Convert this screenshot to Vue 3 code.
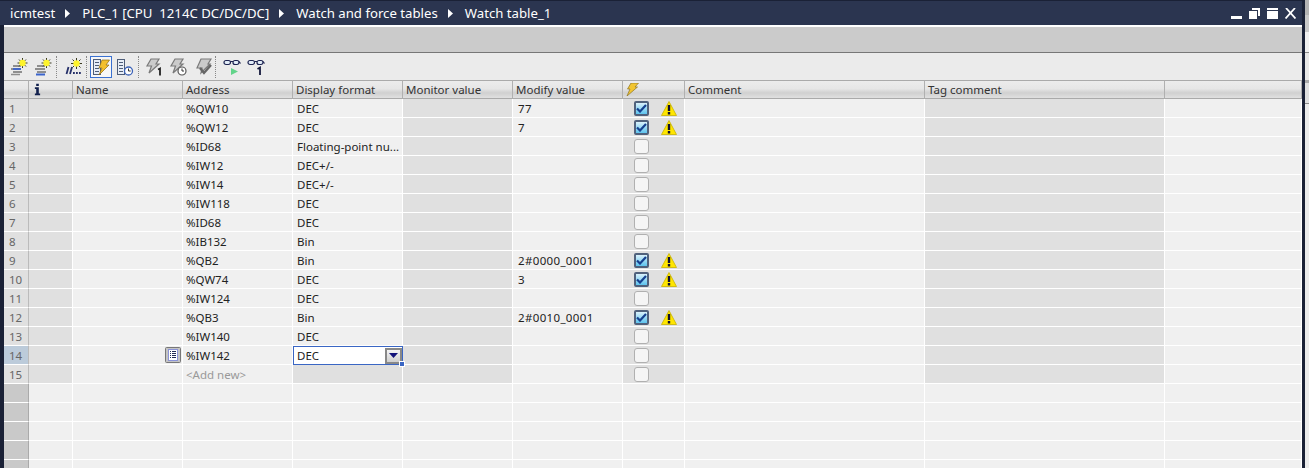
<script setup>
const crumbs = ['icmtest', 'PLC_1 [CPU  1214C DC/DC/DC]', 'Watch and force tables', 'Watch table_1']
const columns = [
  { label: '' }, { label: '', info: true }, { label: 'Name' }, { label: 'Address' }, { label: 'Display format' },
  { label: 'Monitor value' }, { label: 'Modify value' }, { label: '', bolt: true }, { label: 'Comment' },
  { label: 'Tag comment' }, { label: '' }
]
const rows = [
  ['%QW10', 'DEC', '77', true], ['%QW12', 'DEC', '7', true], ['%ID68', 'Floating-point nu...', '', false],
  ['%IW12', 'DEC+/-', '', false], ['%IW14', 'DEC+/-', '', false], ['%IW118', 'DEC', '', false],
  ['%ID68', 'DEC', '', false], ['%IB132', 'Bin', '', false], ['%QB2', 'Bin', '2#0000_0001', true],
  ['%QW74', 'DEC', '3', true], ['%IW124', 'DEC', '', false], ['%QB3', 'Bin', '2#0010_0001', true],
  ['%IW140', 'DEC', '', false], ['%IW142', 'DEC', '', false], ['<Add new>', '', '', false]
].map(([address, format, modify, forced], i) => ({ n: i + 1, address, format, modify, forced }))
const emptyRows = [1, 2, 3, 4, 5]
</script>

<template>
  <div class="window">
    <div class="leftcol">
      <div class="titlebar">
        <template v-for="(c, i) in crumbs" :key="c">
          <span class="crumb">{{ c }}</span>
          <svg v-if="i < crumbs.length - 1" class="sep" width="5" height="9" viewBox="0 0 5 9"><path d="M0 0l5 4.500L0 9z" fill="#fff" /></svg>
        </template>
        <div class="winbtns">
          <svg width="11" height="11" viewBox="0 0 11 11"><rect x="0" y="8" width="11" height="3" fill="#fff" /></svg>
          <svg width="11" height="11" viewBox="0 0 11 11"><path d="M3 0h8v8H9V2H3z" fill="#fff" /><rect x="0" y="3" width="8" height="8" fill="#fff" /></svg>
          <svg width="11" height="11" viewBox="0 0 11 11"><path d="M0 0h11v11H0z" fill="#fff" /><rect x="0" y="2" width="11" height="1" fill="#2b3550" /></svg>
          <svg width="11" height="11" viewBox="0 0 11 11"><path d="M1 0l9.500 10.500M10 0L.5 10.500" stroke="#fff" stroke-width="1.800" fill="none" /></svg>
        </div>
      </div>
      <div class="body">
        <div class="sidebar"></div>
        <div class="main">
          <div class="band"></div>
          <div class="toolbar">
            <svg class="ti m0" width="18" height="18" viewBox="0 0 18 18"><path d="M3 8h8M1 11h10M3 14h9" stroke="#8f8f8f" stroke-width="1.800" /><path d="M1 16.500h9" stroke="#8f8f8f" stroke-width="1.500" /><path d="M3 11h8" stroke="#3b64cc" stroke-width="1.800" /><path d="M12.500 0v10M7.500 5h10M9 1.500l7 7M16 1.500l-7 7" stroke="#3b3b20" stroke-width="1" /><circle cx="12.500" cy="5" r="3.200" fill="#fdf32c" /></svg>
            <svg class="ti m6" width="18" height="18" viewBox="0 0 18 18"><path d="M3 8h8M1 11h10M3 14h9" stroke="#8f8f8f" stroke-width="1.800" /><path d="M2 16.500h9" stroke="#3b64cc" stroke-width="2" /><path d="M12.500 0v10M7.500 5h10M9 1.500l7 7M16 1.500l-7 7" stroke="#3b3b20" stroke-width="1" /><circle cx="12.500" cy="5" r="3.200" fill="#fdf32c" /></svg>
            <i class="tsep a"></i>
            <svg class="ti m6" width="18" height="18" viewBox="0 0 18 18"><path d="M2.500 16l2-7M6 16l2-7" stroke="#27316a" stroke-width="1.800" /><path d="M9 15h1.800M12 15h1.800M15 15h1.800" stroke="#27316a" stroke-width="2.200" /><path d="M12.500 0v11M7 5.500h11M8.500 1.500l8 8M16.500 1.500l-8 8" stroke="#3b3b20" stroke-width="1" /><circle cx="12.500" cy="5.500" r="3.200" fill="#fdf32c" /></svg>
            <i class="tsep b"></i>
            <span class="active">
              <svg width="18" height="18" viewBox="0 0 18 18"><rect x="1.500" y="1.500" width="7" height="15" fill="#e8eef7" stroke="#4e5d78" /><path d="M3 4.500h4M3 7.500h4M3 10.500h4M3 13.500h4" stroke="#4e5d78" /><path d="M10 2h7.500l-3.500 5h3L7 17l3-7H7z" fill="#f3c02c" stroke="#8a6a16" stroke-width=".7" /></svg>
            </span>
            <svg class="ti m4" width="18" height="18" viewBox="0 0 18 18"><rect x="1.500" y="1.500" width="7" height="15" fill="#e8eef7" stroke="#4e5d78" /><path d="M3 4.500h4M3 7.500h4M3 10.500h4M3 13.500h4" stroke="#4e5d78" /><circle cx="12.500" cy="13" r="4" fill="#fff" stroke="#3b62b8" stroke-width="1.300" /><path d="M12.500 10.500V13h2.200" stroke="#333" fill="none" /></svg>
            <i class="tsep c"></i>
            <svg class="ti m6" width="18" height="18" viewBox="0 0 18 18"><path d="M6 1h8l-3 5h3L4 15l2.500-7H2z" fill="#cbcbcb" stroke="#7a7a7a" stroke-width="1.200" /><path d="M13 11.500l2-1v7" stroke="#222" stroke-width="1.800" fill="none" /></svg>
            <svg class="ti m6" width="18" height="18" viewBox="0 0 18 18"><path d="M6 1h8l-3 5h3L4 15l2.500-7H2z" fill="#cbcbcb" stroke="#7a7a7a" stroke-width="1.200" /><circle cx="13" cy="13" r="4" fill="#fff" stroke="#555" stroke-width="1.200" /><path d="M13 10.500V13h2" stroke="#333" fill="none" /></svg>
            <svg class="ti m7" width="18" height="18" viewBox="0 0 18 18"><path d="M7 1h10l-3 5h2L7 15l1-5H3z" fill="#cbcbcb" stroke="#7a7a7a" stroke-width="1.200" /><path d="M6 10l4 5 7-8" stroke="#666" stroke-width="2.400" fill="none" /></svg>
            <i class="tsep d"></i>
            <svg class="ti m7" width="18" height="18" viewBox="0 0 18 18"><rect x="1" y="2.500" width="6.500" height="4" rx="2" fill="#e2ecf7" stroke="#1c2350" stroke-width="1.200" /><rect x="10" y="2.500" width="6" height="4" rx="2" fill="#e2ecf7" stroke="#1c2350" stroke-width="1.200" /><path d="M7.500 3.500H10M16 3.500l1.500 2" stroke="#1c2350" stroke-width="1.200" fill="none" /><path d="M8 10l7 3.500L8 17z" fill="#62d48a" /></svg>
            <svg class="ti m6" width="18" height="18" viewBox="0 0 18 18"><rect x="1" y="2.500" width="6.500" height="4" rx="2" fill="#e2ecf7" stroke="#1c2350" stroke-width="1.200" /><rect x="10" y="2.500" width="6" height="4" rx="2" fill="#e2ecf7" stroke="#1c2350" stroke-width="1.200" /><path d="M7.500 3.500H10M16 3.500l1.500 2" stroke="#1c2350" stroke-width="1.200" fill="none" /><path d="M10.500 11l2.500-1.500V17" stroke="#14193d" stroke-width="1.800" fill="none" /></svg>
          </div>
          <div class="table">
            <div v-for="(col, i) in columns" :key="i" class="th">
              <svg v-if="col.info" class="info" width="7" height="13" viewBox="0 0 8 13"><path d="M2.500 0h3v2.500h-3zM1 4h4.500v7H7v2H1v-2h1.500V6H1z" fill="#12204d" /></svg>
              <svg v-else-if="col.bolt" width="13" height="13" viewBox="0 0 13 13"><path d="M5 0h7.500L9 4h2.500L1 13l3-7H1.500z" fill="#f2c531" stroke="#8b7327" stroke-width=".7" /></svg>
              <template v-else>{{ col.label }}</template>
            </div>
            <template v-for="row in rows" :key="row.n">
              <div class="td num" :class="{ cur: row.n === 14 }">{{ row.n }}</div>
              <div class="td dim"></div>
              <div class="td name">
                <svg v-if="row.n === 14" class="rowbtn" width="16" height="16" viewBox="0 0 16 16"><rect x=".5" y=".5" width="15" height="15" rx="1" fill="#c4c4c4" stroke="#777" /><rect x="3.500" y="2.500" width="9" height="11" fill="#fff" stroke="#8a93d8" /><path d="M5 4.500h1M7 4.500h4M5 6.500h1M7 6.500h4M5 8.500h1M7 8.500h4M5 10.500h1M7 10.500h4" stroke="#232c55" /></svg>
              </div>
              <div class="td" :class="{ add: row.n === 15 }">{{ row.address }}</div>
              <div v-if="row.n === 14" class="td editing">
                <span>{{ row.format }}</span>
                <span class="combo"><svg width="9" height="5" viewBox="0 0 9 5"><path d="M0 0h9L4.500 5z" fill="#12127a" /></svg></span>
                <i class="handle"></i>
              </div>
              <div v-else class="td fmt" :class="{ dim: row.n === 15 }">{{ row.format }}</div>
              <div class="td dim"></div>
              <div class="td mod">{{ row.modify }}</div>
              <div class="td dim force">
                <span class="check" :class="{ on: row.forced }">
                  <svg v-if="row.forced" width="11" height="9" viewBox="0 0 11 9"><path d="M1 4.500l3 3L10 1" stroke="#15408f" stroke-width="2.200" fill="none" /></svg>
                </span>
                <svg v-if="row.forced" class="warn" width="16" height="15" viewBox="0 0 16 15"><path d="M8 .5L15.500 14.500H.5z" fill="#ffe600" stroke="#c9b300" stroke-width=".8" /><path d="M6.800 4h2.400v6H6.800zM6.800 11h2.400v2.500H6.800z" fill="#101030" /></svg>
              </div>
              <div class="td"></div>
              <div class="td dim"></div>
              <div class="td"></div>
            </template>
            <template v-for="r in emptyRows" :key="'e' + r">
              <div class="td blank"></div>
              <div v-for="c in 10" :key="c" class="td"></div>
            </template>
          </div>
        </div>
      </div>
    </div>
    <div class="divider"></div>
    <div class="rightpane">
      <div class="rp a"></div>
      <div class="rp b"></div>
      <div class="rp c"></div>
      <div class="rp d"></div>
      <div class="rp e"></div>
      <div class="rp f"></div>
      <div class="rp g"></div>
    </div>
  </div>
</template>

<style scoped>
.window { width: 1309px; height: 468px; overflow: hidden; background: #fff; font-family: "Noto Sans", sans-serif; display: flex; }
.leftcol { width: 1302px; flex: none; display: flex; flex-direction: column; }
.divider { width: 3px; flex: none; background: #1a2136; }
.rightpane { flex: 1; display: flex; flex-direction: column; background: #ececec; }
.rp.a { height: 15px; background: #b4b4b4; }
.rp.b { height: 17px; background: #c9c9c9; }
.rp.c { height: 20px; background: #f0f0f0; border-bottom: 1px solid #8a8a8a; }
.rp.d { height: 27px; background: #e8e8e8; }
.rp.e { height: 3px; background: #aaa; }
.rp.f { height: 20px; background: #e0e0e0; border-bottom: 1px solid #8a8a8a; }
.rp.g { flex: 1; background: #ececec; }
.titlebar { height: 25px; border-top: 1px solid #1a2136; background: #2b3550; color: #fff; display: flex; align-items: center; padding: 0 6px 0 10px; box-sizing: border-box; font-size: 13.2px; flex: none; }
.sep { margin: 0 12px 0 10px; flex: none; }
.crumb { white-space: pre; }
.winbtns { margin-left: auto; display: flex; gap: 7px; align-items: center; }
.body { flex: 1; display: flex; min-height: 0; }
.sidebar { width: 4px; background: #1a2136; flex: none; }
.main { flex: 1; min-width: 0; padding-top: 2px; background: #fff; display: flex; flex-direction: column; }
.band { height: 25px; background: #cbcbcb; border-bottom: 1px solid #777; flex: none; }
.toolbar { height: 27px; background: #ebebeb; display: flex; align-items: center; flex: none; padding-left: 6px; box-sizing: border-box; }
.ti { flex: none; }
.m0 { margin-left: 0; }
.m4 { margin-left: 4px; }
.m6 { margin-left: 6px; }
.m7 { margin-left: 7px; }
.tsep { width: 1px; height: 22px; border-left: 1px dotted #888; box-sizing: border-box; flex: none; }
.tsep.a { margin: 0 1px 0 4px; }
.tsep.b { margin: 0 3px 0 4px; }
.tsep.c { margin: 0 0 0 4px; }
.tsep.d { margin: 0 0 0 3px; }
.active { width: 22px; height: 22px; box-sizing: border-box; border: 1px solid #3a71d1; background: #f7f7f7; display: flex; align-items: center; justify-content: center; flex: none; }
.table { display: grid; grid-template-columns: 25px 44px 110px 110px 110px 110px 110px 62px 240px 240px 1fr; grid-auto-rows: 19px; font-size: 11.500px; color: #222; }
.th { height: 19px; box-sizing: border-box; border-top: 1px solid #aaa; border-bottom: 1px solid #aaa; border-right: 1px solid #b0b0b0; background: linear-gradient(#ececec 0, #e6e6e6 45%, #d0d0d0 70%, #e0e0e0 100%); padding-left: 3px; display: flex; align-items: center; color: #333; white-space: nowrap; }
.th .info { margin-left: 2px; }
.td { box-sizing: border-box; border-right: 1px solid #fff; border-bottom: 1px solid #fff; background: #f0f0f0; padding-left: 3px; display: flex; align-items: center; white-space: nowrap; overflow: hidden; }
.dim { background: #e0e0e0; }
.num { background: #e0e0e0; color: #666; padding-left: 5px; border-right: 1px solid #bbb; }
.num.cur { background: #bccbda; }
.blank { background: #c9c9c9; border-right: 1px solid #aaa; }
.name { justify-content: flex-end; padding-right: 1px; }
.rowbtn { flex: none; }
.add { color: #999; }
.fmt { padding-left: 4px; }
.mod { padding-left: 5px; letter-spacing: .35px; }
.editing { position: relative; overflow: visible; background: #fff; border: 1px solid #3a66c4; padding-left: 3px; justify-content: space-between; padding-right: 0; z-index: 1; }
.combo { width: 17px; height: 16px; box-sizing: border-box; border: 2px solid #888; background: linear-gradient(#f4f4f4, #cfcfcf); display: flex; align-items: center; justify-content: center; }
.handle { position: absolute; right: -2px; bottom: -2px; width: 4px; height: 4px; background: #3a66c4; outline: 1px solid #fff; }
.force { padding-left: 11px; gap: 12px; }
.check { width: 15px; height: 15px; flex: none; box-sizing: border-box; border: 1px solid #b0b0b0; border-radius: 3px; background: #f5f5f5; display: flex; align-items: center; justify-content: center; }
.check.on { border: 2px solid #50617c; border-radius: 2px; background: linear-gradient(#d9f1fb, #5dc3ee); }
.warn { flex: none; }
</style>
